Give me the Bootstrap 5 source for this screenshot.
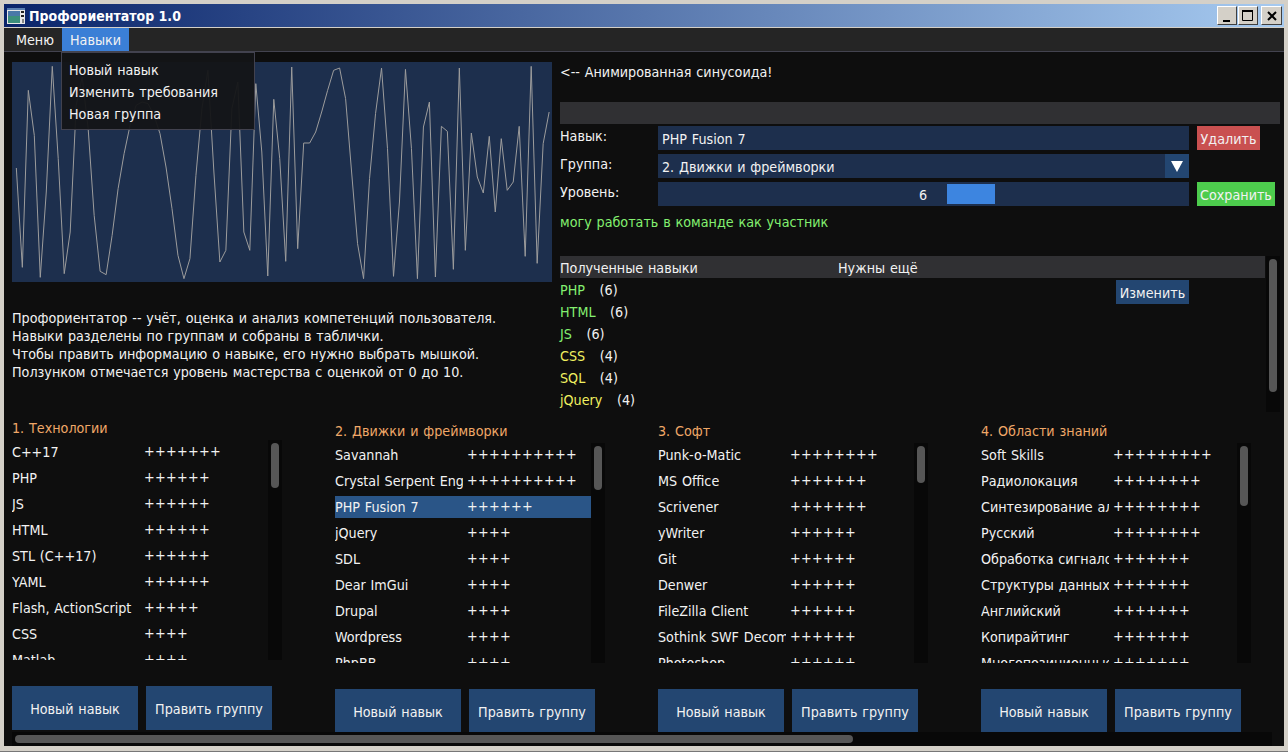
<!DOCTYPE html>
<html lang="ru">
<head>
<meta charset="utf-8">
<title>Профориентатор 1.0</title>
<link href="https://cdn.jsdelivr.net/npm/bootstrap@5.3.0/dist/css/bootstrap.min.css" rel="stylesheet">
<style>
html,body{height:100%;margin:0;overflow:hidden;background:#d4d0c8}
body{font-family:"DejaVu Sans Condensed","DejaVu Sans","Liberation Sans",sans-serif;font-size:14.2px;word-spacing:.8px;line-height:18px;color:#f2f2f2}
.app-frame{width:1288px;height:752px;padding:4px 4px 5px;background:#d4d0c8;border-bottom:1px solid #777}
.title-strip{height:23px;background:linear-gradient(90deg,#0a246a,#a6caf0);padding:0 2px 0 3px;margin-bottom:1px}
.title-text{font-family:"DejaVu Sans Condensed","DejaVu Sans",sans-serif;font-weight:700;font-size:14px;word-spacing:0;color:#fff;margin-left:4px}
.win-btn{width:20px;height:19px;background:#d4d0c8;border:1px solid;border-color:#fff #404040 #404040 #fff;color:#000}
.win-gap{margin-left:1px}
.win-gap2{margin-left:3px;width:21px}
.app-body{background:#0e0e0e;height:718px;position:relative;overflow:hidden}
.menu-strip{height:23px;background:#252525;padding-left:4px;box-shadow:0 1px 0 #43434f;margin-bottom:1px}
.menu-cell{height:23px;padding:3px 8px 0;color:#f2f2f2}
.menu-on{background:#3b7fd6}
.drop-panel.dropdown-menu{display:block;left:57px;top:24px;width:194px;height:78px;min-width:0;margin:0;padding:6px 0 0;border-radius:0;border:1px solid #42424f;background:rgba(20,21,23,.95);font-size:14.2px;line-height:18px}
.drop-panel .dropdown-item{padding:0 7px;height:22px;line-height:22px;color:#f2f2f2}
.main-pad{padding:10px 0 0 8px}
.top-zone{height:357px}
.plot-col{width:548px;flex:none}
.plot-box{width:540px;height:220px;background:#1d2f4d;display:block}
.about-text{margin-top:27px}
.side-col{width:720px;flex:none}
.note-line{height:18px;margin:1px 0 21px}
.head-strip{height:22px;background:#303033}
.form-line{height:24px;margin-top:4px}
.form-line.first-line{margin-top:2px}
.label-cell{width:98px;margin-top:-4px}
.field-cell{width:531px;height:24px;background:#1d2f4d;padding:4px 4px 0;position:relative}
.combo-arrow{width:24px;height:24px;background:#234671;margin:-4px -4px 0 auto}
.tri{width:0;height:0;border-left:6.5px solid transparent;border-right:6.5px solid transparent;border-top:11px solid #fff}
.slide-grab{width:48px;height:20px;background:#3d85e0;margin-left:19px}
.slide-field{padding:2px 0 0}
.slide-num{margin-left:260px;padding-top:2px;width:10px;text-align:center}
.flat-btn.btn{border:0;border-radius:0;color:#f2f2f2;font-size:14.2px;line-height:18px;padding:2px 0 0;word-spacing:.8px}
.red-btn.btn{width:63px;height:24px;background:#c95050;margin-left:8px}
.green-btn.btn{width:78px;height:24px;background:#4dcc4d;margin-left:8px}
.level-hint{color:#84f070;margin:7px 0 25px}
.skills-zone{height:156px}
.skills-table{width:706px}
.head-strip.table-head{height:22px}
.head-a{width:278px;padding-top:3px}
.head-b{padding-top:3px}
.skill-rows{width:556px;padding-top:1px}
.skill-row{height:22px;line-height:22px;white-space:pre}
.ok-skill{color:#84f070}
.mid-skill{color:#f0f060}
.edit-btn.btn{width:73px;height:24px;background:#234671;margin-top:2px}
.v-track{width:14px;background:#080808;padding:3px;position:relative;flex:none}
.v-thumb{width:8px;background:#565656;border-radius:4px}
.skills-zone .v-track{margin-left:1px}
.groups-zone{height:314px}
.group-col{width:323px;flex:none}
.group-shift{margin-top:3px}
.group-title{color:#f0a868;height:18px;margin-bottom:3px}
.group-list{width:270px;height:220px;margin-bottom:26px}
.rows-clip{width:256px;height:220px;overflow:hidden;padding-top:1px;flex:none}
.skill-item{height:22px;margin-bottom:4px;line-height:22px;white-space:nowrap}
.skill-item.is-picked{background:#2a5587}
.name-cell{width:128px;overflow:hidden;margin-right:5px;flex:none}
.plus-cell{letter-spacing:.3px;margin:-1px 0 0 -1px}
.action-btn.btn{width:126px;height:44px;background:#234671;margin-right:8px;flex:none}
.h-track{position:absolute;left:8px;bottom:0;width:1260px;height:14px;background:#080808;padding:3px}
.h-thumb{width:838px;height:8px;background:#565656;border-radius:4px}
</style>
</head>
<body>
<div class="app-frame">
  <div class="title-strip d-flex align-items-center">
    <svg width="18" height="16" viewBox="0 0 18 16" aria-hidden="true"><rect width="18" height="16" fill="#e8e8e8"/><rect width="18" height="2" fill="#5a7fb0"/><rect x="1" y="3" width="12" height="12" fill="#3c8f7c"/><rect x="1" y="3" width="12" height="5" fill="#4a78a8"/><rect x="14" y="3" width="3" height="2" fill="#222"/><rect x="14" y="7" width="3" height="2" fill="#222"/><rect x="15" y="11" width="2" height="4" fill="#888"/></svg>
    <span class="title-text">Профориентатор 1.0</span>
    <span class="win-btn ms-auto d-flex align-items-end justify-content-center"><svg width="10" height="4" viewBox="0 0 10 4"><rect x="1" y="0" width="7" height="2"/></svg></span>
    <span class="win-btn win-gap d-flex align-items-center justify-content-center"><svg width="12" height="12" viewBox="0 0 12 12"><path d="M.5.5h10v10H.5z" fill="none" stroke="#000"/><path d="M0 1h11" stroke="#000" stroke-width="2"/></svg></span>
    <span class="win-btn win-gap2 d-flex align-items-center justify-content-center"><svg width="10" height="10" viewBox="0 0 10 10"><path d="M1 1l8 8M9 1l-8 8" stroke="#000" stroke-width="2"/></svg></span>
  </div>
  <div class="app-body">
    <div class="menu-strip d-flex">
      <div class="menu-cell">Меню</div>
      <div class="menu-cell menu-on">Навыки</div>
    </div>
    <div class="main-pad">
      <div class="top-zone d-flex">
        <div class="plot-col">
          <svg class="plot-box" viewBox="0 0 1620 660" aria-hidden="true"><polyline id="sinePath" fill="none" stroke="#9c9c9c" stroke-width="3" points=""/></svg>
          <div class="about-text">Профориентатор -- учёт, оценка и анализ компетенций пользователя.<br>Навыки разделены по группам и собраны в таблички.<br>Чтобы править информацию о навыке, его нужно выбрать мышкой.<br>Ползунком отмечается уровень мастерства с оценкой от 0 до 10.</div>
        </div>
        <div class="side-col">
          <div class="note-line">&lt;-- Анимированная синусоида!</div>
          <div class="head-strip"></div>
          <div class="form-line first-line d-flex align-items-center">
            <div class="label-cell">Навык:</div>
            <div class="field-cell">PHP Fusion 7</div>
            <button class="btn flat-btn red-btn" type="button">Удалить</button>
          </div>
          <div class="form-line d-flex align-items-center">
            <div class="label-cell">Группа:</div>
            <div class="field-cell d-flex">2. Движки и фреймворки<span class="combo-arrow d-flex align-items-center justify-content-center"><span class="tri"></span></span></div>
          </div>
          <div class="form-line d-flex align-items-center">
            <div class="label-cell">Уровень:</div>
            <div class="field-cell slide-field d-flex"><span class="slide-num">6</span><span class="slide-grab"></span></div>
            <button class="btn flat-btn green-btn" type="button">Сохранить</button>
          </div>
          <div class="level-hint">могу работать в команде как участник</div>
          <div class="skills-zone d-flex">
            <div class="skills-table">
              <div class="head-strip table-head d-flex"><div class="head-a">Полученные навыки</div><div class="head-b">Нужны ещё</div></div>
              <div class="d-flex">
                <div class="skill-rows">
                  <div class="skill-row"><span class="ok-skill">PHP</span>   (6)</div>
                  <div class="skill-row"><span class="ok-skill">HTML</span>   (6)</div>
                  <div class="skill-row"><span class="ok-skill">JS</span>   (6)</div>
                  <div class="skill-row"><span class="mid-skill">CSS</span>   (4)</div>
                  <div class="skill-row"><span class="mid-skill">SQL</span>   (4)</div>
                  <div class="skill-row"><span class="mid-skill">jQuery</span>   (4)</div>
                </div>
                <button class="btn flat-btn edit-btn align-self-start" type="button">Изменить</button>
              </div>
            </div>
            <div class="v-track"><div class="v-thumb" style="height:133px"></div></div>
          </div>
        </div>
      </div>
      <div class="groups-zone d-flex" id="groupsZone"></div>
    </div>
    <div class="h-track"><div class="h-thumb"></div></div>
    <div class="dropdown-menu drop-panel">
      <a class="dropdown-item" href="#">Новый навык</a>
      <a class="dropdown-item" href="#">Изменить требования</a>
      <a class="dropdown-item" href="#">Новая группа</a>
    </div>
  </div>
</div>
<script src="https://cdn.jsdelivr.net/npm/bootstrap@5.3.0/dist/js/bootstrap.bundle.min.js"></script>
<script>
var ys=[318,616,85,220,646,390,13,290,635,510,130,45,200,460,628,638,520,380,275,190,130,120,125,160,215,315,440,580,650,590,
340,140,25,330,600,565,140,60,510,565,65,270,642,112,290,598,15,560,243,243,210,150,85,25,18,110,330,545,650,350,
155,18,260,643,420,22,260,650,195,120,645,193,208,622,18,565,213,345,393,223,450,230,385,360,193,583,13,604,245,150];
document.getElementById('sinePath').setAttribute('points',ys.map(function(y,k){return (13+k*17.96).toFixed(1)+','+y}).join(' '));
var groups=[
 ['1. Технологии',45,[['C++17',7],['PHP',6],['JS',6],['HTML',6],['STL (C++17)',6],['YAML',6],['Flash, ActionScript',5],['CSS',4],['Matlab',4]]],
 ['2. Движки и фреймворки',44,[['Savannah',10],['Crystal Serpent Engine',10],['PHP Fusion 7',6],['jQuery',4],['SDL',4],['Dear ImGui',4],['Drupal',4],['Wordpress',4],['PhpBB',4]]],
 ['3. Софт',37,[['Punk-o-Matic',8],['MS Office',7],['Scrivener',7],['yWriter',6],['Git',6],['Denwer',6],['FileZilla Client',6],['Sothink SWF Decompiler',6],['Photoshop',6]]],
 ['4. Области знаний',60,[['Soft Skills',9],['Радиолокация',8],['Синтезирование алгоритмов',8],['Русский',8],['Обработка сигналов',7],['Структуры данных',7],['Английский',7],['Копирайтинг',7],['Многопозиционные',7]]]
];
document.getElementById('groupsZone').innerHTML=groups.map(function(g,i){
 return '<div class="group-col'+(i?' group-shift':'')+'"><div class="group-title">'+g[0]+'</div><div class="group-list d-flex"><div class="rows-clip">'+
 g[2].map(function(r){return '<div class="skill-item d-flex'+(r[0]=='PHP Fusion 7'?' is-picked':'')+'"><span class="name-cell">'+r[0]+'</span><span class="plus-cell">'+'+'.repeat(r[1])+'</span></div>'}).join('')+
 '</div><div class="v-track"><div class="v-thumb" style="height:'+g[1]+'px"></div></div></div><div class="d-flex"><button class="btn flat-btn action-btn" type="button">Новый навык</button><button class="btn flat-btn action-btn" type="button">Править группу</button></div></div>';
}).join('');
</script>
</body>
</html>
